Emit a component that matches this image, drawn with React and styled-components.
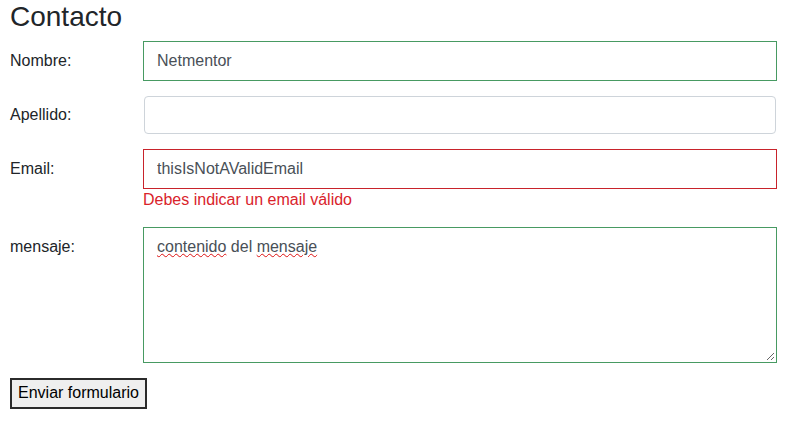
import React from "react";
import styled, { createGlobalStyle } from "styled-components";

const GlobalStyle = createGlobalStyle`
	body {
		margin: 0;
		background: #fff;
		font-family: "Liberation Sans", Arial, sans-serif;
		font-size: 16px;
		line-height: 1.5;
		color: #212529;
	}
`;

const Page = styled.div`
	padding: 0 16px 0 10px;
`;

const Title = styled.h3`
	margin: 0 0 8px;
	font-size: 28px;
	font-weight: 500;
	line-height: 1.2;
	color: #212529;
`;

const Row = styled.div`
	display: grid;
	grid-template-columns: 134px 1fr;
	margin-bottom: 16px;
`;

const Label = styled.label`
	padding-top: 7px;
	line-height: 1.5;
`;

const Field = styled.div`
	display: flex;
	flex-direction: column;
`;

const stateColor = {
	valid: "#479a62",
	invalid: "#c8232b",
};

const Input = styled.input`
	box-sizing: border-box;
	height: 38px;
	width: 100%;
	padding: 6px 12px;
	font-family: inherit;
	font-size: 16px;
	color: #495057;
	background: #fff;
	border: 1px solid #ced4da;
	border-radius: ${(props) => (props.$state ? "0" : "4px")};
	outline: ${(props) =>
		props.$state ? `1px solid ${stateColor[props.$state]}` : "none"};
	outline-offset: 0;
	${(props) => props.$state && `border-color: #fff;`}
`;

const MessageBox = styled.div`
	box-sizing: border-box;
	height: 134px;
	padding: 6px 12px;
	color: #495057;
	background: #fff;
	border: 1px solid #fff;
	outline: 1px solid ${stateColor.valid};
	overflow: auto;
	resize: vertical;
`;

const Typo = styled.span`
	text-decoration: underline wavy #d11;
	text-decoration-thickness: 1px;
	text-underline-offset: 1px;
`;

const Error = styled.div`
	color: #d9232b;
	line-height: 1.5;
	margin-left: -1px;
`;

const SubmitButton = styled.button`
	font-family: "Liberation Sans", Arial, sans-serif;
	font-size: 16px;
	color: #000;
	background: #efefef;
	border: 2px solid #2b2b2b;
	border-radius: 0;
	padding: 3px 6px 4px;
	line-height: 1.3;
`;

export default function App() {
	return (
		<>
			<GlobalStyle />
			<Page>
				<Title>Contacto</Title>
				<Row>
					<Label>Nombre:</Label>
					<Input $state="valid" defaultValue="Netmentor" />
				</Row>
				<Row>
					<Label>Apellido:</Label>
					<Input />
				</Row>
				<Row>
					<Label>Email:</Label>
					<Field>
						<Input $state="invalid" defaultValue="thisIsNotAValidEmail" />
						<Error>Debes indicar un email válido</Error>
					</Field>
				</Row>
				<Row>
					<Label>mensaje:</Label>
					<MessageBox>
						<Typo>contenido</Typo> del <Typo>mensaje</Typo>
					</MessageBox>
				</Row>
				<SubmitButton>Enviar formulario</SubmitButton>
			</Page>
		</>
	);
}
